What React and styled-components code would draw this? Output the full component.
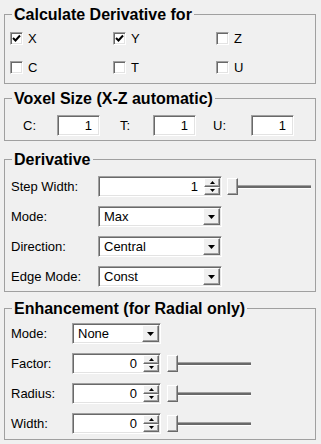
import React from 'react';
import styled, { createGlobalStyle } from 'styled-components';

const GlobalStyle = createGlobalStyle`
  body {
    margin: 0;
    background: #f0f0f0;
    font-family: "Liberation Sans", Arial, sans-serif;
    font-size: 13px;
    color: #000;
  }
`;

const Page = styled.div`
  width: 321px;
  height: 444px;
  box-sizing: border-box;
  padding: 0 5px 0 4px;
  display: flex;
  flex-direction: column;
`;

const Group = styled.fieldset`
  margin: ${p => p.$mt}px 0 0;
  padding: 0;
  border: 1px solid #a0a0a0;
  min-width: 0;
`;

const Title = styled.legend`
  margin-left: 7px;
  padding: 0 2px;
  font-size: 16px;
  line-height: 19px;
  font-weight: bold;
`;

const Body = styled.div`
  padding: ${p => p.$pad};
`;

const CheckGrid = styled.div`
  display: grid;
  grid-template-columns: 103px 103px auto;
  row-gap: 8px;
`;

const CheckItem = styled.label`
  display: flex;
  align-items: center;
  height: 21px;
  gap: 5px;
`;

const Box = styled.span`
  width: 13px;
  height: 13px;
  box-sizing: border-box;
  background: #fff;
  border: 1px solid;
  border-color: #a0a0a0 #fff #fff #a0a0a0;
  box-shadow: inset 1px 1px #696969, inset -1px -1px #e3e3e3;
  display: flex;
  align-items: center;
  justify-content: center;
`;

const VoxelRow = styled.div`
  display: flex;
  padding-left: 18px;
`;

const VoxelItem = styled.div`
  display: flex;
  align-items: center;
  width: ${p => p.$w}px;
`;

const Label = styled.span`
  width: ${p => p.$w}px;
  flex-shrink: 0;
`;

const Sunken = styled.div`
  height: 21px;
  width: ${p => p.$w}px;
  box-sizing: border-box;
  background: #fff;
  border: 1px solid;
  border-color: #a0a0a0 #fff #fff #a0a0a0;
  box-shadow: inset 1px 1px #696969, inset -1px -1px #e3e3e3;
  display: flex;
  align-items: stretch;
  padding: 1px;
`;

const Value = styled.span`
  flex: 1;
  display: flex;
  align-items: center;
  justify-content: ${p => (p.$left ? 'flex-start' : 'flex-end')};
  padding: ${p => (p.$left ? '0 0 0 4px' : '0 6px 0 0')};
`;

const Rows = styled.div`
  display: flex;
  flex-direction: column;
  gap: ${p => p.$gap}px;
`;

const Row = styled.div`
  display: flex;
  align-items: center;
  height: 21px;
`;

const RowLabel = styled.span`
  width: ${p => p.$w}px;
  flex-shrink: 0;
`;

const Spins = styled.div`
  display: flex;
  flex-direction: column;
  width: 16px;
`;

const RaisedButton = styled.div`
  flex: 1;
  width: ${p => (p.$w ? `${p.$w}px` : 'auto')};
  box-sizing: border-box;
  background: #f0f0f0;
  border: 1px solid;
  border-color: #fff #696969 #696969 #fff;
  box-shadow: inset -1px -1px #a0a0a0;
  display: flex;
  align-items: center;
  justify-content: center;
`;

const ComboButton = styled(RaisedButton)`
  flex: none;
  width: 17px;
`;

const Slider = styled.div`
  display: flex;
  align-items: center;
  width: 84px;
  margin-left: ${p => p.$ml}px;
`;

const Thumb = styled.div`
  width: 11px;
  height: 17px;
  box-sizing: border-box;
  flex-shrink: 0;
  background: #f0f0f0;
  border: 1px solid;
  border-color: #fff #696969 #696969 #fff;
  box-shadow: inset -1px -1px #a0a0a0;
`;

const Track = styled.div`
  flex: 1;
  height: 2px;
  border-top: 1px solid #a0a0a0;
  background: #696969;
  border-bottom: 1px solid #fff;
`;

const Check = () => (
  <svg width="9" height="9" viewBox="0 0 9 9">
    <path d="M1 4 L3.5 6.5 L8 1.5" fill="none" stroke="#000" strokeWidth="2" />
  </svg>
);

const Tri = ({ up, w = 7, h = 4 }) => (
  <svg width={w} height={h} viewBox={`0 0 ${w} ${h}`}>
    <polygon points={up ? `0,${h} ${w},${h} ${w / 2},0` : `0,0 ${w},0 ${w / 2},${h}`} fill="#000" />
  </svg>
);

const CheckBox = ({ label, checked }) => (
  <CheckItem>
    <Box>{checked && <Check />}</Box>
    {label}
  </CheckItem>
);

const SpinBox = ({ w, value }) => (
  <Sunken $w={w}>
    <Value>{value}</Value>
    <Spins>
      <RaisedButton><Tri up w={5} h={3} /></RaisedButton>
      <RaisedButton><Tri w={5} h={3} /></RaisedButton>
    </Spins>
  </Sunken>
);

const Combo = ({ w, value }) => (
  <Sunken $w={w}>
    <Value $left>{value}</Value>
    <ComboButton><Tri /></ComboButton>
  </Sunken>
);

const Field = ({ value }) => (
  <Sunken $w={43}>
    <Value>{value}</Value>
  </Sunken>
);

const App = () => (
  <Page>
    <GlobalStyle />
    <Group $mt={5}>
      <Title>Calculate Derivative for</Title>
      <Body $pad="4px 0 5px 5px">
        <CheckGrid>
          <CheckBox label="X" checked />
          <CheckBox label="Y" checked />
          <CheckBox label="Z" />
          <CheckBox label="C" />
          <CheckBox label="T" />
          <CheckBox label="U" />
        </CheckGrid>
      </Body>
    </Group>

    <Group $mt={5}>
      <Title>Voxel Size (X-Z automatic)</Title>
      <Body $pad="7px 0 4px 0">
        <VoxelRow>
          <VoxelItem $w={97}><Label $w={34}>C:</Label><Field value="1" /></VoxelItem>
          <VoxelItem $w={93}><Label $w={33}>T:</Label><Field value="1" /></VoxelItem>
          <VoxelItem $w={81}><Label $w={38}>U:</Label><Field value="1" /></VoxelItem>
        </VoxelRow>
      </Body>
    </Group>

    <Group $mt={9}>
      <Title>Derivative</Title>
      <Body $pad="7px 0 4px 6px">
        <Rows $gap={9}>
          <Row>
            <RowLabel $w={87}>Step Width:</RowLabel>
            <SpinBox w={124} value="1" />
            <Slider $ml={5}><Thumb /><Track /></Slider>
          </Row>
          <Row>
            <RowLabel $w={87}>Mode:</RowLabel>
            <Combo w={124} value="Max" />
          </Row>
          <Row>
            <RowLabel $w={87}>Direction:</RowLabel>
            <Combo w={124} value="Central" />
          </Row>
          <Row>
            <RowLabel $w={87}>Edge Mode:</RowLabel>
            <Combo w={124} value="Const" />
          </Row>
        </Rows>
      </Body>
    </Group>

    <Group $mt={7}>
      <Title>Enhancement (for Radial only)</Title>
      <Body $pad="5px 0 5px 6px">
        <Rows $gap={9}>
          <Row>
            <RowLabel $w={61}>Mode:</RowLabel>
            <Combo w={89} value="None" />
          </Row>
          <Row>
            <RowLabel $w={61}>Factor:</RowLabel>
            <SpinBox w={89} value="0" />
            <Slider $ml={6}><Thumb /><Track /></Slider>
          </Row>
          <Row>
            <RowLabel $w={61}>Radius:</RowLabel>
            <SpinBox w={89} value="0" />
            <Slider $ml={6}><Thumb /><Track /></Slider>
          </Row>
          <Row>
            <RowLabel $w={61}>Width:</RowLabel>
            <SpinBox w={89} value="0" />
            <Slider $ml={6}><Thumb /><Track /></Slider>
          </Row>
        </Rows>
      </Body>
    </Group>
  </Page>
);

export default App;
